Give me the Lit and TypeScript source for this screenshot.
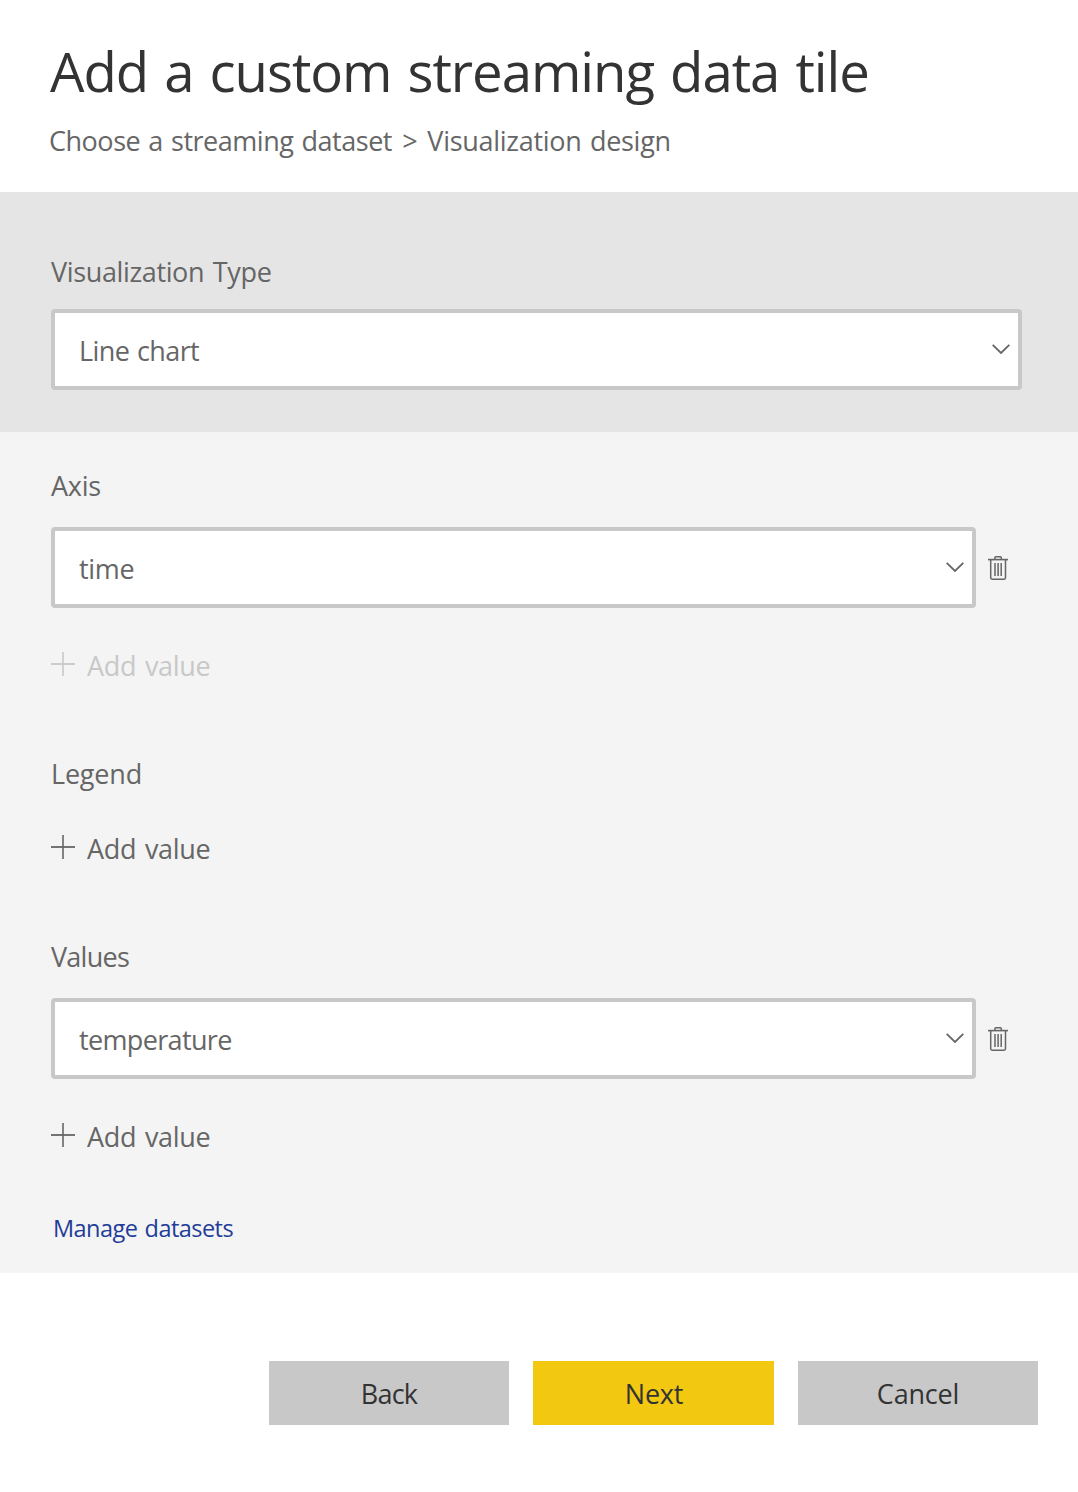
import { LitElement, html, css, svg, nothing } from "lit";
import { customElement, property } from "lit/decorators.js";
import { classMap } from "lit/directives/class-map.js";

@customElement("select-box")
class SelectBox extends LitElement {
  @property() value = "";

  static styles = css`
    :host { display: block; flex: 1; min-width: 0; }
    .box {
      box-sizing: border-box;
      height: 81px;
      display: flex;
      align-items: center;
      justify-content: space-between;
      padding: 0 8px 0 24px;
      background: #fff;
      border: 4px solid #c8c8c8;
      border-radius: 4px;
    }
    .text { line-height: 36px; padding-top: 2px; white-space: nowrap; }
    .chart { letter-spacing: -0.6px; word-spacing: 1.3px; }
    .time { letter-spacing: -0.3px; }
    .temperature { letter-spacing: -0.65px; }
    svg { display: block; margin-bottom: 2px; }
  `;

  render() {
    return html`<div class="box">
      <span class=${classMap({
        text: true,
        chart: this.value === "Line chart",
        time: this.value === "time",
        temperature: this.value === "temperature",
      })}>${this.value}</span>
      <svg width="18" height="10" viewBox="0 0 18 10" fill="none" stroke="#666" stroke-width="1.8">
        <path d="M.7.8 9 9 17.3.8" />
      </svg>
    </div>`;
  }
}

@customElement("add-value")
class AddValue extends LitElement {
  @property({ type: Boolean }) disabled = false;

  static styles = css`
    :host { display: block; }
    .row { display: flex; align-items: center; gap: 12px; height: 36px; color: #666; line-height: 36px; letter-spacing: -0.3px; word-spacing: 2px; }
    .off { color: #c8c8c8; }
    svg { display: block; margin-top: -4px; }
  `;

  render() {
    return html`<div class=${classMap({ row: true, off: this.disabled })}>
      <svg width="24" height="24" viewBox="0 0 24 24" stroke="currentColor" fill="none">
        <path d="M0 12h24" stroke-width="1.8" /><path d="M12 0v24" stroke-width="1.6" />
      </svg>
      <span>Add value</span>
    </div>`;
  }
}

const trash = svg`<svg class="trash" width="20" height="24" viewBox="0 0 20 24" fill="none" stroke="#666">
  <path d="M0 3.6h20" stroke-width="1.6" />
  <path d="M6.9 3.6V1.7q0-.9.9-.9h4.6q.9 0 .9.9v1.9" stroke-width="1.5" />
  <path d="M2.7 4v17.8q0 1.4 1.4 1.4h12q1.4 0 1.4-1.4V4" stroke-width="1.5" />
  <path d="M7 7v13M10.1 7v13M13.2 7v13" stroke-width="1.5" />
</svg>`;

interface Field { label: string; value?: string; disabled?: boolean; }

const fields: Field[] = [
  { label: "Axis", value: "time", disabled: true },
  { label: "Legend" },
  { label: "Values", value: "temperature" },
];

@customElement("app-root")
class AppRoot extends LitElement {
  static styles = css`
    :host {
      display: block;
      min-height: 1492px;
      background: #fff;
      color: #666;
      font: 400 27px/36px "Open Sans", "Noto Sans", sans-serif;
    }
    h1, p, h2 { margin: 0; font-weight: 400; font-size: inherit; white-space: nowrap; }
    header { box-sizing: border-box; height: 192px; padding: 35px 49px 0; }
    h1 { font-size: 54.5px; line-height: 72px; letter-spacing: -1.04px; word-spacing: 3px; color: #333; padding-left: 1px; }
    .crumbs { margin-top: 16px; letter-spacing: -0.28px; word-spacing: 1.6px; }
    .first { letter-spacing: -0.48px; }
    .sep { margin: 0 1.5px 0 2px; }
    .type { box-sizing: border-box; height: 240px; padding: 62px 56px 0 51px; background: #e5e5e5; }
    .type h2 { letter-spacing: -0.36px; word-spacing: 2px; margin-bottom: 19px; }
    .fields { box-sizing: border-box; height: 841px; padding: 36px 70px 0 51px; background: #f4f4f4; }
    .field { margin-bottom: 72px; }
    .field:last-of-type { margin-bottom: 57px; }
    .field h2 { margin-bottom: 39px; letter-spacing: -0.2px; }
    .field.filled h2 { margin-bottom: 23px; }
    .axis h2 { letter-spacing: -0.25px; }
    .values h2 { letter-spacing: -0.75px; }
    .row { display: flex; align-items: center; gap: 12px; margin-bottom: 40px; }
    .trash { display: block; flex: none; margin-top: 1px; }
    .manage { display: block; margin-left: 2px; font-size: 23.5px; line-height: 32px; letter-spacing: -0.54px; word-spacing: 1.6px; color: #1f3d99; }
    footer { display: grid; grid-template-columns: 240px 241px 240px; gap: 24px; justify-content: end; padding: 88px 40px 0 0; }
    button { box-sizing: border-box; height: 64px; padding: 2px 0 0; border: 0; background: #c8c8c8; color: #333; font: inherit; line-height: 62px; letter-spacing: -0.2px; }
    .back { letter-spacing: -0.8px; }
    .next { background: #f2c811; padding-left: 1px; }
  `;

  render() {
    return html`
      <header>
        <h1>Add a custom streaming data tile</h1>
        <p class="crumbs"><span class="first">Choose a streaming dataset</span> <span class="sep">&gt;</span> <span>Visualization design</span></p>
      </header>
      <section class="type">
        <h2>Visualization Type</h2>
        <select-box value="Line chart"></select-box>
      </section>
      <section class="fields">
        ${fields.map((f) => html`
          <div class=${classMap({ field: true, filled: !!f.value, axis: f.label === "Axis", values: f.label === "Values" })}>
            <h2>${f.label}</h2>
            ${f.value ? html`<div class="row"><select-box .value=${f.value}></select-box>${trash}</div>` : nothing}
            <add-value ?disabled=${!!f.disabled}></add-value>
          </div>`)}
        <a class="manage">Manage datasets</a>
      </section>
      <footer>
        <button class="back">Back</button>
        <button class="next">Next</button>
        <button>Cancel</button>
      </footer>`;
  }
}
